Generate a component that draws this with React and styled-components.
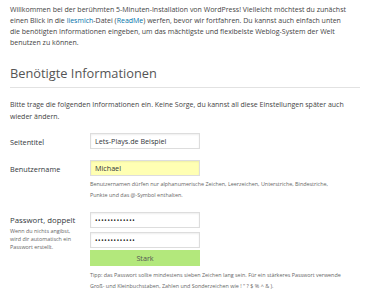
import React from 'react'
import styled, { createGlobalStyle } from 'styled-components'

const Global = createGlobalStyle`
  html, body { margin: 0; padding: 0; background: #fff; }
  body { font-family: "Open Sans", "Liberation Sans", sans-serif; color: #444; }
`

const Page = styled.div`
  width: 370px;
  height: 297px;
  box-sizing: border-box;
  padding: 4px 10px 0 10px;
  overflow: hidden;
`

const Intro = styled.p`
  margin: 0;
  font-size: 7px;
  line-height: 11px;
  color: #444;
  white-space: nowrap;
`

const Link = styled.a`
  color: #0073aa;
  text-decoration: none;
`

const Heading = styled.h1`
  margin: 16px 0 0 0;
  padding-bottom: 5px;
  font-size: 12.8px;
  font-weight: 400;
  color: #555;
  border-bottom: 1px solid #e2e2e2;
  line-height: 18px;
`

const Lead = styled.p`
  margin: 11px 0 0 0;
  font-size: 7px;
  line-height: 12px;
  color: #444;
  white-space: nowrap;
`

const Form = styled.div`
  margin-top: 10px;
  display: grid;
  grid-template-columns: 80px 1fr;
  row-gap: 11px;
`

const Label = styled.div`
  font-size: ${p => p.$big ? 7.8 : 7.3}px;
  color: #32373c;
  padding-top: ${p => p.$top || 4}px;
  line-height: 10px;
`

const LabelNote = styled.div`
  font-size: 5.4px;
  line-height: 8px;
  color: #666;
  margin-top: 2px;
`

const Field = styled.div`
  display: flex;
  flex-direction: column;
  gap: 4px;
`

const Input = styled.div`
  width: 110px;
  height: 16px;
  box-sizing: border-box;
  border: 1px solid #ddd;
  box-shadow: inset 0 1px 2px rgba(0,0,0,0.07);
  background: ${p => p.$bg || '#fff'};
  font-size: ${p => p.$dots ? 6.4 : 7.2}px;
  color: ${p => p.$dots ? '#222' : '#32373c'};
  display: flex;
  align-items: center;
  padding-left: 4px;
  letter-spacing: ${p => p.$dots ? '0.7px' : '0'};
`

const Strength = styled.div`
  width: 110px;
  height: 16px;
  background: #b3e87c;
  color: #555;
  font-size: 7.2px;
  display: flex;
  align-items: center;
  justify-content: center;
  margin-top: -2px;
`

const Note = styled.p`
  margin: 0;
  font-size: 5.4px;
  line-height: 11px;
  color: #666;
  white-space: nowrap;
`

export default function App() {
  return (
    <Page>
      <Global />
      <Intro>
        Willkommen bei der berühmten 5-Minuten-Installation von WordPress! Vielleicht möchtest du zunächst<br />
        einen Blick in die <Link>liesmich</Link>-Datei (<Link>ReadMe</Link>) werfen, bevor wir fortfahren. Du kannst auch einfach unten<br />
        die benötigten Informationen eingeben, um das mächtigste und flexibelste Weblog-System der Welt<br />
        benutzen zu können.
      </Intro>
      <Heading>Benötigte Informationen</Heading>
      <Lead>
        Bitte trage die folgenden Informationen ein. Keine Sorge, du kannst all diese Einstellungen später auch<br />
        wieder ändern.
      </Lead>
      <Form>
        <Label>Seitentitel</Label>
        <Field>
          <Input>Lets-Plays.de Beispiel</Input>
        </Field>

        <Label>Benutzername</Label>
        <Field>
          <Input $bg="#ffffb3">Michael</Input>
          <Note style={{ marginTop: -1 }}>
            Benutzernamen dürfen nur alphanumerische Zeichen, Leerzeichen, Unterstriche, Bindestriche,<br />
            Punkte und das @-Symbol enthalten.
          </Note>
        </Field>

        <Label $top={3} $big>
          Passwort, doppelt
          <LabelNote>
            Wenn du nichts angibst,<br />wird dir automatisch ein<br />Passwort erstellt.
          </LabelNote>
        </Label>
        <Field>
          <Input $dots>•••••••••••••</Input>
          <Input $dots>•••••••••••••</Input>
          <Strength>Stark</Strength>
          <Note>
            Tipp: das Passwort sollte mindestens sieben Zeichen lang sein. Für ein stärkeres Passwort verwende<br />
            Groß- und Kleinbuchstaben, Zahlen und Sonderzeichen wie ! " ? $ % ^ &amp; ).
          </Note>
        </Field>
      </Form>
    </Page>
  )
}
